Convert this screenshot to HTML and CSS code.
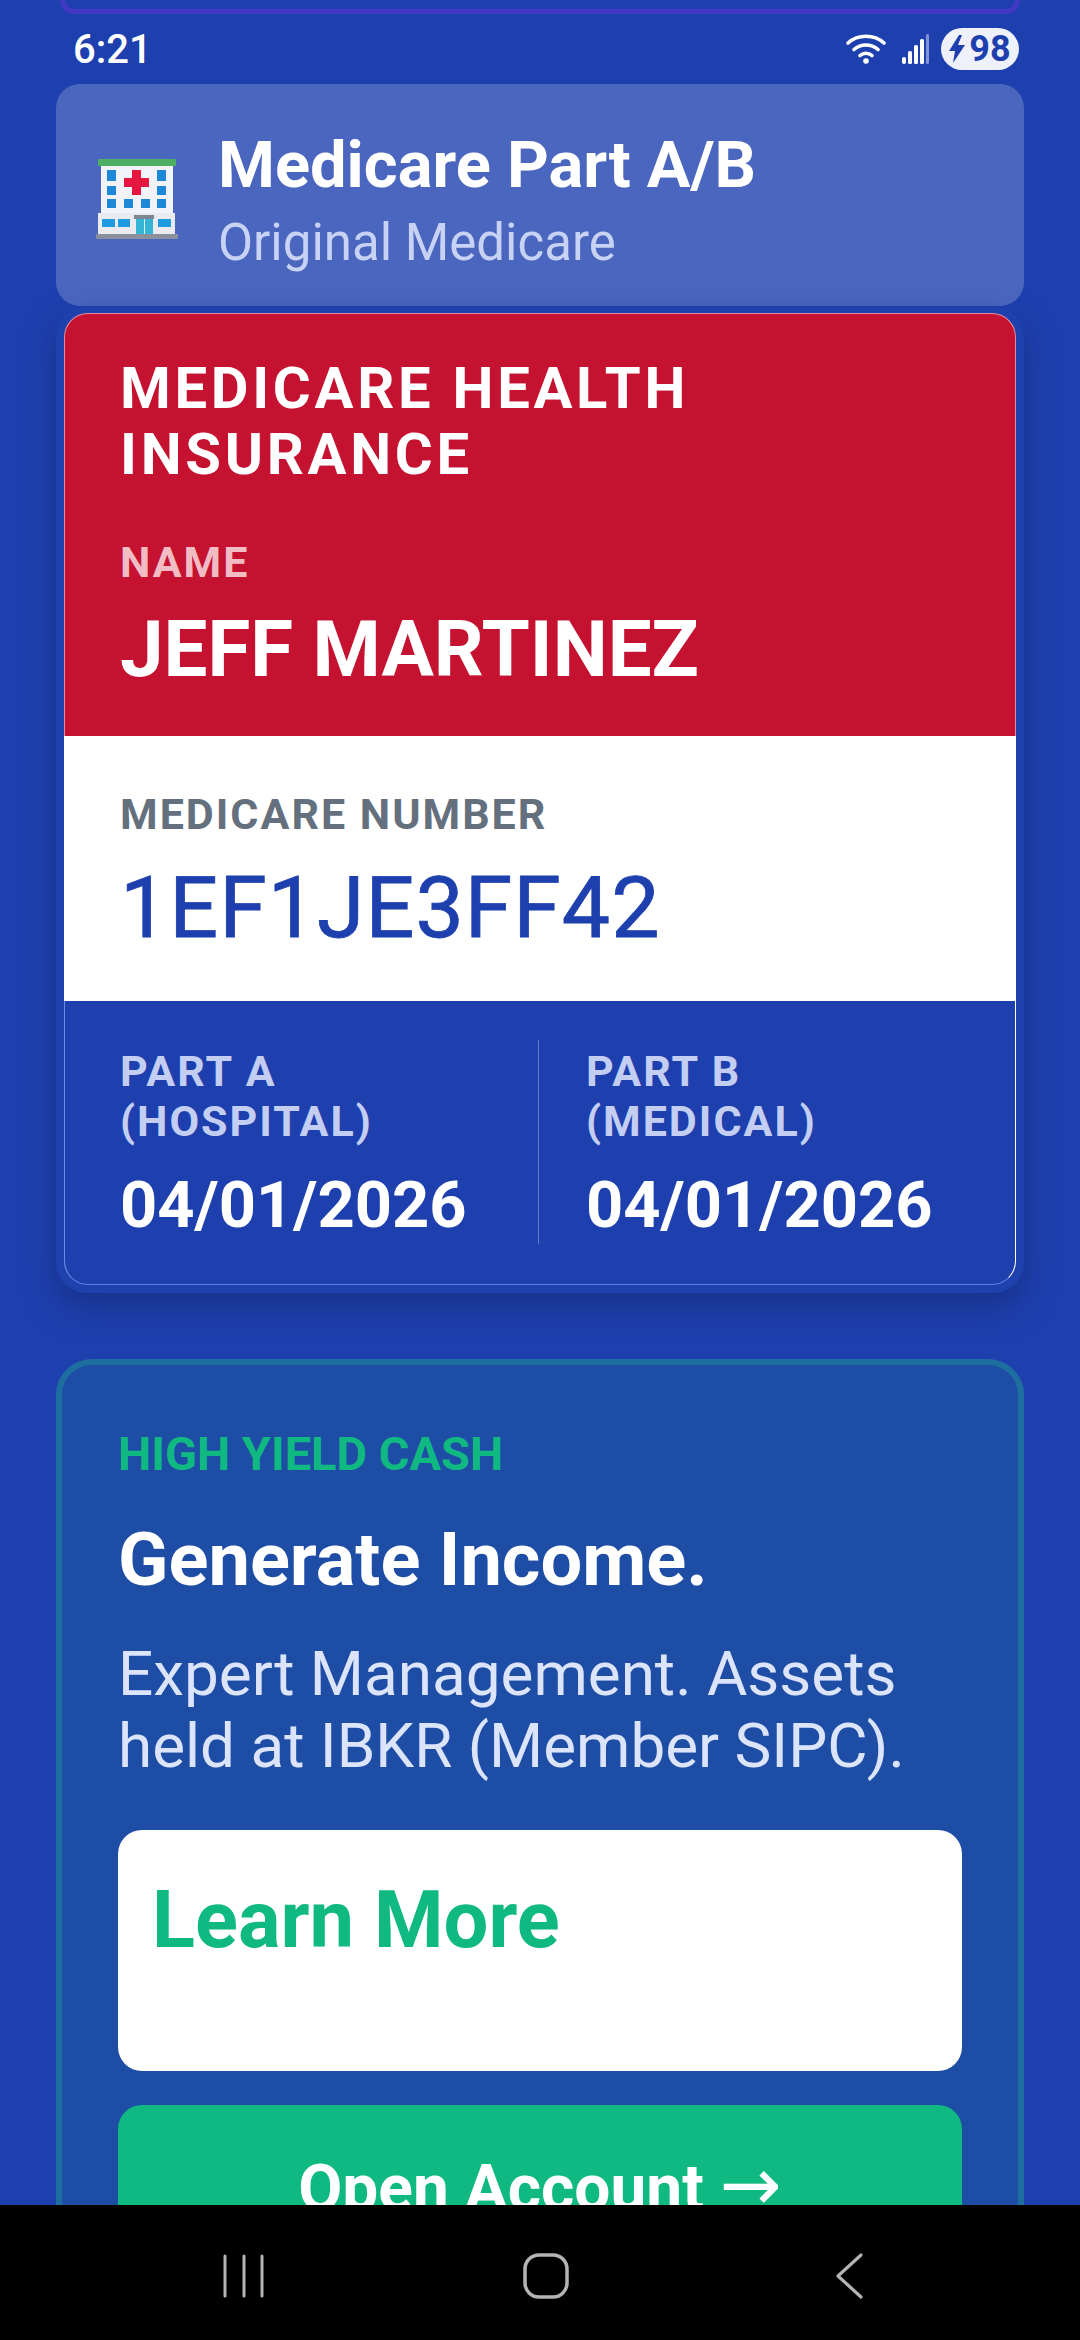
FILE: index.html
```html
<!DOCTYPE html>
<html lang="en">
<head>
    <meta charset="UTF-8">
    <meta name="viewport" content="width=device-width, initial-scale=1.0">
    <title>Medicare Part A/B</title>
    <link rel="stylesheet" href="styles.css">
</head>
<body>
    <div id="screen">
        <div id="content">
            <div class="top-stub"></div>

            <div class="status-bar">
                <span class="clock">6:21</span>
                <div class="status-icons">
                    <svg class="wifi" width="40" height="30" viewBox="0 0 40 30" fill="none" stroke="#fff" stroke-width="3.6" stroke-linecap="round">
                        <path d="M2 9C12 0 28 0 38 9"/>
                        <path d="M8 15.500C15 9.500 25 9.500 32 15.500"/>
                        <path d="M14 21.500C17.500 18.500 22.500 18.500 26 21.500"/>
                        <circle cx="20" cy="27" r="2.800" fill="#fff" stroke="none"/>
                    </svg>
                    <svg class="signal" width="27" height="30" viewBox="0 0 27 30" fill="#fff">
                        <rect x="0" y="23" width="4" height="7" rx="2"/>
                        <rect x="6" y="17" width="4" height="13" rx="1.500"/>
                        <rect x="12" y="11" width="4" height="19" rx="1.500"/>
                        <rect x="18" y="5" width="4" height="25" rx="1.500"/>
                        <rect x="24" y="0" width="3" height="30" rx="1.500" fill="#7f95d8"/>
                    </svg>
                    <div class="battery">
                        <svg width="16" height="28" viewBox="0 0 16 28" fill="#1e40af"><path d="M10 0L0 16h6l-2 12L16 10H9l4-10z"/></svg>
                        <span>98</span>
                    </div>
                </div>
            </div>

            <div class="plan-header">
                <svg class="hospital" width="82" height="80" viewBox="0 0 82 80">
                    <rect x="2" y="0" width="78" height="7" rx="1" fill="#4caf63"/>
                    <rect x="5" y="7" width="72" height="47" fill="#f1f3f8"/>
                    <rect x="11" y="11" width="9" height="11" fill="#1e88d8"/>
                    <rect x="61" y="11" width="9" height="11" fill="#1e88d8"/>
                    <rect x="11" y="27" width="9" height="9" fill="#1e88d8"/>
                    <rect x="61" y="27" width="9" height="9" fill="#1e88d8"/>
                    <rect x="11" y="40" width="9" height="9" fill="#1e88d8"/>
                    <rect x="28" y="40" width="9" height="9" fill="#1e88d8"/>
                    <rect x="45" y="40" width="9" height="9" fill="#1e88d8"/>
                    <rect x="61" y="40" width="9" height="9" fill="#1e88d8"/>
                    <path d="M36 11h9v8h8v9h-8v8h-9v-8h-8v-9h8z" fill="#e5163f"/>
                    <rect x="2" y="54" width="77" height="21" fill="#e9ebf0"/>
                    <rect x="6" y="60" width="13" height="8" fill="#1e9ae0"/>
                    <rect x="22" y="60" width="12" height="8" fill="#1e9ae0"/>
                    <rect x="62" y="60" width="13" height="8" fill="#1e9ae0"/>
                    <rect x="38" y="56" width="20" height="4" fill="#7d8792"/>
                    <rect x="40" y="60" width="17" height="15" fill="#35b5d6"/>
                    <rect x="48" y="60" width="1" height="15" fill="#d8f2f7"/>
                    <rect x="0" y="75" width="82" height="5" rx="1" fill="#8a919d"/>
                </svg>
                <div class="plan-text">
                    <h1>Medicare Part A/B</h1>
                    <p>Original Medicare</p>
                </div>
            </div>

            <div class="id-card">
                <div class="id-inner">
                    <div class="id-red">
                        <h2>MEDICARE HEALTH INSURANCE</h2>
                        <div class="name-label">NAME</div>
                        <div class="name-value">JEFF MARTINEZ</div>
                    </div>
                    <div class="id-white">
                        <div class="number-label">MEDICARE NUMBER</div>
                        <div class="number-value">1EF1JE3FF42</div>
                    </div>
                    <div class="id-blue">
                        <div class="part">
                            <div class="part-label">PART A<br>(HOSPITAL)</div>
                            <div class="part-date">04/01/2026</div>
                        </div>
                        <div class="part part-b">
                            <div class="part-label">PART B<br>(MEDICAL)</div>
                            <div class="part-date">04/01/2026</div>
                        </div>
                    </div>
                </div>
            </div>

            <div class="promo">
                <div class="promo-tag">HIGH YIELD CASH</div>
                <h3>Generate Income.</h3>
                <p>Expert Management. Assets held at IBKR (Member SIPC).</p>
                <div class="learn-more">Learn More</div>
                <div class="open-account">Open Account <span class="arrow">→</span></div>
            </div>
        </div>

        <div id="nav-bar">
            <svg class="nav-recents" width="44" height="44" viewBox="0 0 44 44" stroke="#b4b4b4" stroke-width="3" stroke-linecap="round">
                <path d="M3 2v40M22 2v40M40 2v40"/>
            </svg>
            <svg class="nav-home" width="46" height="46" viewBox="0 0 46 46" fill="none" stroke="#b4b4b4" stroke-width="3.500">
                <rect x="2" y="2" width="42" height="42" rx="14"/>
            </svg>
            <svg width="28" height="46" viewBox="0 0 28 46" fill="none" stroke="#b4b4b4" stroke-width="3.200" stroke-linecap="round" stroke-linejoin="round">
                <path d="M26 2L3 23l23 21"/>
            </svg>
        </div>
    </div>
</body>
</html>
```
FILE: styles.css
```css
body {
    margin: 0;
    background-color: #1e40af;
    font-family: Roboto, "Liberation Sans", sans-serif;
    color: #ffffff;
}

#screen {
    width: 1080px;
    height: 2340px;
    display: flex;
    flex-direction: column;
    overflow: hidden;
}

#content {
    height: 2205px;
    overflow: hidden;
    padding: 0 56px;
    box-sizing: border-box;
    flex-shrink: 0;
}

.top-stub {
    height: 14px;
    box-sizing: border-box;
    margin: 0 4px;
    border: 5px solid #4338c4;
    border-top: none;
    border-radius: 0 0 24px 24px;
}

.status-bar {
    height: 70px;
    display: flex;
    justify-content: space-between;
    align-items: center;
    padding: 0 5px 0 17px;
}

.clock {
    font-size: 40px;
    font-weight: 500;
}

.status-icons {
    display: flex;
    align-items: center;
}

.wifi {
    margin-right: 16px;
}

.signal {
    margin-right: 12px;
}

.battery {
    width: 78px;
    height: 42px;
    border-radius: 21px;
    background-color: #eef1fa;
    color: #1e40af;
    display: flex;
    align-items: center;
    justify-content: center;
    gap: 4px;
    font-size: 36px;
    font-weight: 700;
}

.plan-header {
    height: 222px;
    box-sizing: border-box;
    background-color: #4b66bf;
    border-radius: 24px;
    display: flex;
    align-items: center;
    gap: 40px;
    padding: 0 0 0 40px;
}

.hospital {
    margin-top: 8px;
}

.plan-text {
    margin-top: 10px;
}

.plan-text h1 {
    margin: 0;
    font-size: 65px;
    font-weight: 700;
    line-height: 72px;
}

.plan-text p {
    margin: 13px 0 0;
    font-size: 51px;
    line-height: 58px;
    color: #c7d2f4;
}

.id-card {
    margin-top: 1px;
    padding: 6px 8px 8px;
    background-color: #1f41ad;
    border-radius: 30px;
    box-shadow: 0 14px 30px rgba(20, 40, 110, 0.55);
}

.id-red {
    height: 423px;
    box-sizing: border-box;
    background-color: #c41230;
    padding: 41px 55px 0;
    border: 1px solid #e58b9c;
    border-bottom: none;
    border-radius: 24px 24px 0 0;
}

.id-red h2 {
    margin: 0;
    font-size: 58px;
    font-weight: 700;
    line-height: 66px;
    letter-spacing: 3.7px;
}

.name-label {
    margin-top: 51px;
    font-size: 43px;
    font-weight: 700;
    line-height: 48px;
    letter-spacing: 2px;
    color: #f2bcc5;
}

.name-value {
    margin-top: 22px;
    font-size: 78px;
    font-weight: 700;
    line-height: 84px;
}

.id-white {
    height: 265px;
    box-sizing: border-box;
    background-color: #ffffff;
    padding: 54px 56px 0;
}

.number-label {
    font-size: 43px;
    font-weight: 700;
    line-height: 48px;
    letter-spacing: 2px;
    color: #64707d;
}

.number-value {
    margin-top: 20px;
    font-size: 86px;
    font-weight: 400;
    line-height: 100px;
    letter-spacing: 1px;
    -webkit-text-stroke: 0.8px #1e40af;
    color: #1e40af;
}

.id-blue {
    height: 284px;
    box-sizing: border-box;
    background-color: #1e40af;
    padding: 39px 0 0 55px;
    display: flex;
    border-left: 1px solid #6f8be0;
    border-right: 1px solid #ffffff;
    border-bottom: 1px solid #5b7fe8;
    border-radius: 0 0 24px 24px;
}

.part {
    width: 418px;
    height: 204px;
    border-right: 1px solid #5f79c8;
}

.part-b {
    width: auto;
    padding-left: 47px;
    border-right: none;
}

.part-label {
    padding-top: 6px;
    font-size: 43px;
    font-weight: 700;
    line-height: 50px;
    letter-spacing: 2px;
    color: #c3cef2;
}

.part-date {
    margin-top: 23px;
    font-size: 65px;
    font-weight: 700;
    line-height: 72px;
}

.promo {
    margin-top: 66px;
    padding: 64px 56px 0;
    background-color: #1e4da6;
    border: 6px solid #1f6ea0;
    border-radius: 36px;
}

.promo-tag {
    font-size: 47px;
    font-weight: 700;
    line-height: 50px;
    color: #10b981;
}

.promo h3 {
    margin: 41px 0 0;
    font-size: 74px;
    font-weight: 700;
    line-height: 80px;
}

.promo p {
    margin: 38px 0 0;
    font-size: 62px;
    line-height: 72px;
    color: #dbe4fb;
}

.learn-more {
    margin-top: 48px;
    height: 241px;
    box-sizing: border-box;
    background-color: #ffffff;
    border-radius: 24px;
    padding: 48px 34px 0;
    font-size: 79.500px;
    font-weight: 700;
    line-height: 84px;
    color: #10b981;
}

.open-account {
    margin-top: 34px;
    height: 200px;
    box-sizing: border-box;
    padding-top: 48px;
    background-color: #10b981;
    border-radius: 24px;
    text-align: center;
    font-size: 64px;
    font-weight: 700;
    line-height: 72px;
}

.arrow {
    font-family: "DejaVu Sans", sans-serif;
    font-size: 74px;
    font-weight: 400;
    line-height: 60px;
}

#nav-bar {
    flex: 1;
    background-color: #000000;
    display: flex;
    align-items: center;
    padding: 7px 0 0 222px;
}

.nav-recents {
    margin-right: 257px;
}

.nav-home {
    margin-right: 266px;
}
```
